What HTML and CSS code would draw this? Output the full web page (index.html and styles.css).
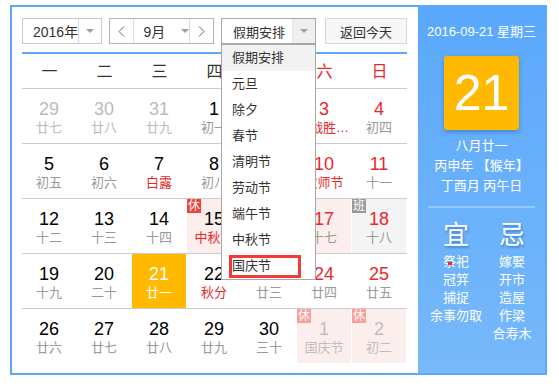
FILE: index.html
```html
<!DOCTYPE html>
<html lang="zh">
<head>
<meta charset="utf-8">
<title>万年历</title>
<link rel="stylesheet" href="styles.css">
</head>
<body>
<div class="cal">
  <div class="main">
    <div class="head">
      <div class="sel year"><span class="val">2016年</span><span class="arr"><i class="tri"></i></span></div>
      <div class="sel month">
        <span class="nav"><svg width="7" height="11" viewBox="0 0 7 11"><polyline points="6,0.5 1,5.5 6,10.5" fill="none" stroke="#666" stroke-width="1"/></svg></span>
        <span class="val">9月<i class="tri"></i></span>
        <span class="nav"><svg width="7" height="11" viewBox="0 0 7 11"><polyline points="1,0.5 6,5.5 1,10.5" fill="none" stroke="#666" stroke-width="1"/></svg></span>
      </div>
      <div class="sel hol">
        <span class="val">假期安排</span><span class="arr"><i class="tri"></i></span>
        <ul class="menu">
          <li class="on">假期安排</li>
          <li>元旦</li>
          <li>除夕</li>
          <li>春节</li>
          <li>清明节</li>
          <li>劳动节</li>
          <li>端午节</li>
          <li>中秋节</li>
          <li class="mark">国庆节<span class="box"></span></li>
        </ul>
      </div>
      <button class="today">返回今天</button>
    </div>
    <div class="weekdays">
      <span>一</span><span>二</span><span>三</span><span>四</span><span>五</span><span class="we">六</span><span class="we">日</span>
    </div>
    <div class="weeks">
      <div class="week">
        <div class="d other"><div class="n">29</div><div class="l">廿七</div></div>
        <div class="d other"><div class="n">30</div><div class="l">廿八</div></div>
        <div class="d other"><div class="n">31</div><div class="l">廿九</div></div>
        <div class="d"><div class="n">1</div><div class="l">初一</div></div>
        <div class="d"><div class="n">2</div><div class="l">初二</div></div>
        <div class="d we"><div class="n">3</div><div class="l red">抗战胜利纪念日</div></div>
        <div class="d we"><div class="n">4</div><div class="l">初四</div></div>
      </div>
      <div class="week">
        <div class="d"><div class="n">5</div><div class="l">初五</div></div>
        <div class="d"><div class="n">6</div><div class="l">初六</div></div>
        <div class="d"><div class="n">7</div><div class="l red">白露</div></div>
        <div class="d"><div class="n">8</div><div class="l">初八</div></div>
        <div class="d"><div class="n">9</div><div class="l">初九</div></div>
        <div class="d we"><div class="n">10</div><div class="l red">教师节</div></div>
        <div class="d we"><div class="n">11</div><div class="l">十一</div></div>
      </div>
      <div class="week">
        <div class="d"><div class="n">12</div><div class="l">十二</div></div>
        <div class="d"><div class="n">13</div><div class="l">十三</div></div>
        <div class="d"><div class="n">14</div><div class="l">十四</div></div>
        <div class="d rest"><b class="tag">休</b><div class="n">15</div><div class="l red">中秋节</div></div>
        <div class="d rest"><b class="tag">休</b><div class="n">16</div><div class="l">十六</div></div>
        <div class="d rest we"><b class="tag">休</b><div class="n">17</div><div class="l">十七</div></div>
        <div class="d work we"><b class="tag">班</b><div class="n">18</div><div class="l">十八</div></div>
      </div>
      <div class="week">
        <div class="d"><div class="n">19</div><div class="l">十九</div></div>
        <div class="d"><div class="n">20</div><div class="l">二十</div></div>
        <div class="d today-cell"><div class="n">21</div><div class="l">廿一</div></div>
        <div class="d"><div class="n">22</div><div class="l red">秋分</div></div>
        <div class="d"><div class="n">23</div><div class="l">廿三</div></div>
        <div class="d we"><div class="n">24</div><div class="l">廿四</div></div>
        <div class="d we"><div class="n">25</div><div class="l">廿五</div></div>
      </div>
      <div class="week">
        <div class="d"><div class="n">26</div><div class="l">廿六</div></div>
        <div class="d"><div class="n">27</div><div class="l">廿七</div></div>
        <div class="d"><div class="n">28</div><div class="l">廿八</div></div>
        <div class="d"><div class="n">29</div><div class="l">廿九</div></div>
        <div class="d"><div class="n">30</div><div class="l">三十</div></div>
        <div class="d rest next"><b class="tag">休</b><div class="n">1</div><div class="l">国庆节</div></div>
        <div class="d rest next"><b class="tag">休</b><div class="n">2</div><div class="l">初二</div></div>
      </div>
    </div>
  </div>
  <div class="side">
    <div class="date">2016-09-21 星期三</div>
    <div class="big">21</div>
    <div class="lunar">
      <div>八月廿一</div>
      <div>丙申年 【猴年】</div>
      <div>丁酉月 丙午日</div>
    </div>
    <div class="sep"></div>
    <div class="yj">
      <div class="col">
        <div class="t">宜</div>
        <div class="it dot">祭祀</div>
        <div class="it">冠笄</div>
        <div class="it">捕捉</div>
        <div class="it">余事勿取</div>
      </div>
      <div class="col">
        <div class="t">忌</div>
        <div class="it">嫁娶</div>
        <div class="it">开市</div>
        <div class="it">造屋</div>
        <div class="it">作梁</div>
        <div class="it">合寿木</div>
      </div>
    </div>
  </div>
</div>
</body>
</html>
```

FILE: styles.css
```css
* { box-sizing: border-box; }
body {
  margin: 0;
  background: #fff;
  font-family: "Liberation Sans", "Noto Sans CJK SC", sans-serif;
  color: #333;
}
.cal {
  margin: 5px 0 0 10px;
  width: 537px;
  height: 370px;
  border: 2px solid #5aa9fb;
  display: flex;
}
.main {
  width: 406px;
  padding: 11px 11px 0 10px;
}
.head {
  display: flex;
  height: 26px;
  padding-bottom: 8px;
  border-bottom: 2px solid #5aa9fb;
  box-sizing: content-box;
}
.sel {
  display: flex;
  height: 26px;
  border: 1px solid #c9c9c9;
  background: #fff;
  font-size: 13px;
  color: #333;
  white-space: nowrap;
}
.sel .val {
  display: flex;
  align-items: center;
  white-space: nowrap;
}
.sel .arr {
  display: flex;
  align-items: center;
  justify-content: center;
  border-left: 1px solid #ddd;
}
.tri {
  display: block;
  flex: none;
  width: 0;
  height: 0;
  border-left: 4px solid transparent;
  border-right: 4px solid transparent;
  border-top: 4px solid #a0a0a0;
}
.year { width: 80px; }
.year .val { width: 55px; padding-left: 10px; font-size: 14px; }
.year .arr { width: 23px; }
.month {
  width: 105px;
  margin-left: 7px;
  border-color: #b5b5b5;
}
.month .nav {
  width: 23px;
  display: flex;
  align-items: center;
  justify-content: center;
}
.month .val {
  width: 59px;
  padding-left: 10px;
  border-left: 1px solid #ddd;
  border-right: 1px solid #ddd;
  font-size: 14px;
}
.month .val .tri { margin-left: 16px; }
.hol {
  position: relative;
  width: 95px;
  margin-left: 7px;
  border-color: #a8a8a8;
}
.hol .val { width: 70px; padding-left: 11px; font-size: 13px; }
.hol .arr { width: 23px; background: #efefef; border-left-color: #e4e4e4; }
.menu {
  position: absolute;
  top: 25px;
  left: -1px;
  width: 95px;
  margin: 0;
  padding: 0;
  list-style: none;
  background: #fff;
  border: 1px solid #a8a8a8;
  z-index: 5;
}
.menu li {
  position: relative;
  height: 26px;
  line-height: 26px;
  padding-left: 10px;
  font-size: 13px;
  color: #333;
}
.menu li.on { background: #f2f2f2; }
.menu .box {
  position: absolute;
  left: 7px;
  top: 2px;
  width: 72px;
  height: 23px;
  border: 3px solid #f23a3a;
}
.today {
  margin-left: 9px;
  width: 83px;
  height: 26px;
  padding: 0;
  border: 1px solid #d8d8d8;
  background: #f7f7f7;
  font-family: inherit;
  font-size: 13px;
  color: #333;
}
.weekdays {
  display: flex;
  height: 35px;
  border-bottom: 1px solid #ccc;
}
.weekdays span {
  width: 55px;
  text-align: center;
  line-height: 36px;
  font-size: 16px;
  color: #333;
}
.weekdays .we { color: #e8282d; }
.week {
  display: flex;
  height: 55px;
  border-bottom: 1px solid #ccc;
}
.week:last-child { border-bottom: none; height: 54px; }
.d {
  position: relative;
  width: 54px;
  height: 54px;
  margin-right: 1px;
  padding-top: 9px;
  text-align: center;
}
.n {
  font-size: 18px;
  line-height: 22px;
  color: #000;
}
.l {
  font-size: 13px;
  line-height: 16px;
  color: #999;
  white-space: nowrap;
  overflow: hidden;
  text-overflow: ellipsis;
}
.l.red { color: #e8282d; }
.we .n { color: #e8282d; }
.other .n, .other .l { color: #bbb; }
.rest { background: #fdeeee; }
.work { background: #f4f4f4; }
.tag {
  position: absolute;
  top: 0;
  left: 0;
  width: 14px;
  height: 14px;
  font-size: 12px;
  line-height: 14px;
  font-weight: normal;
  color: #fff;
  background: #f2413d;
  text-align: center;
}
.work .tag { background: #999; }
.next .tag { background: #f7a09c; }
.next .n, .next .l { color: #c4bcbc; }
.today-cell { background: #ffba00; }
.today-cell .n, .today-cell .l { color: #fff; }
.side {
  width: 127px;
  background: linear-gradient(#5aa8fc, #77b9fa);
  color: #fff;
  text-align: center;
  padding-top: 16px;
}
.date {
  font-size: 13px;
  line-height: 18px;
}
.big {
  width: 75px;
  height: 74px;
  margin: 15px auto 0;
  background: #ffb900;
  border-radius: 3px;
  box-shadow: 0 2px 4px rgba(0, 60, 130, .35);
  font-size: 50px;
  line-height: 74px;
}
.lunar {
  margin-top: 6px;
  font-size: 13px;
  line-height: 20px;
}
.sep {
  height: 2px;
  margin: 10px 10px 0;
  background: rgba(255, 255, 255, .3);
}
.yj {
  display: flex;
  padding: 0 0 0 10px;
  margin-top: 12px;
}
.col { width: 56px; }
.t {
  font-size: 26px;
  line-height: 30px;
  margin-bottom: 3px;
  text-shadow: 1px 2px 2px rgba(0, 50, 120, .35);
}
.it {
  font-size: 13px;
  line-height: 18px;
  white-space: nowrap;
}
.dot { position: relative; }
.dot::after {
  content: "";
  position: absolute;
  left: 20px;
  top: 9px;
  width: 4px;
  height: 3px;
  background: #f22;
}
```
